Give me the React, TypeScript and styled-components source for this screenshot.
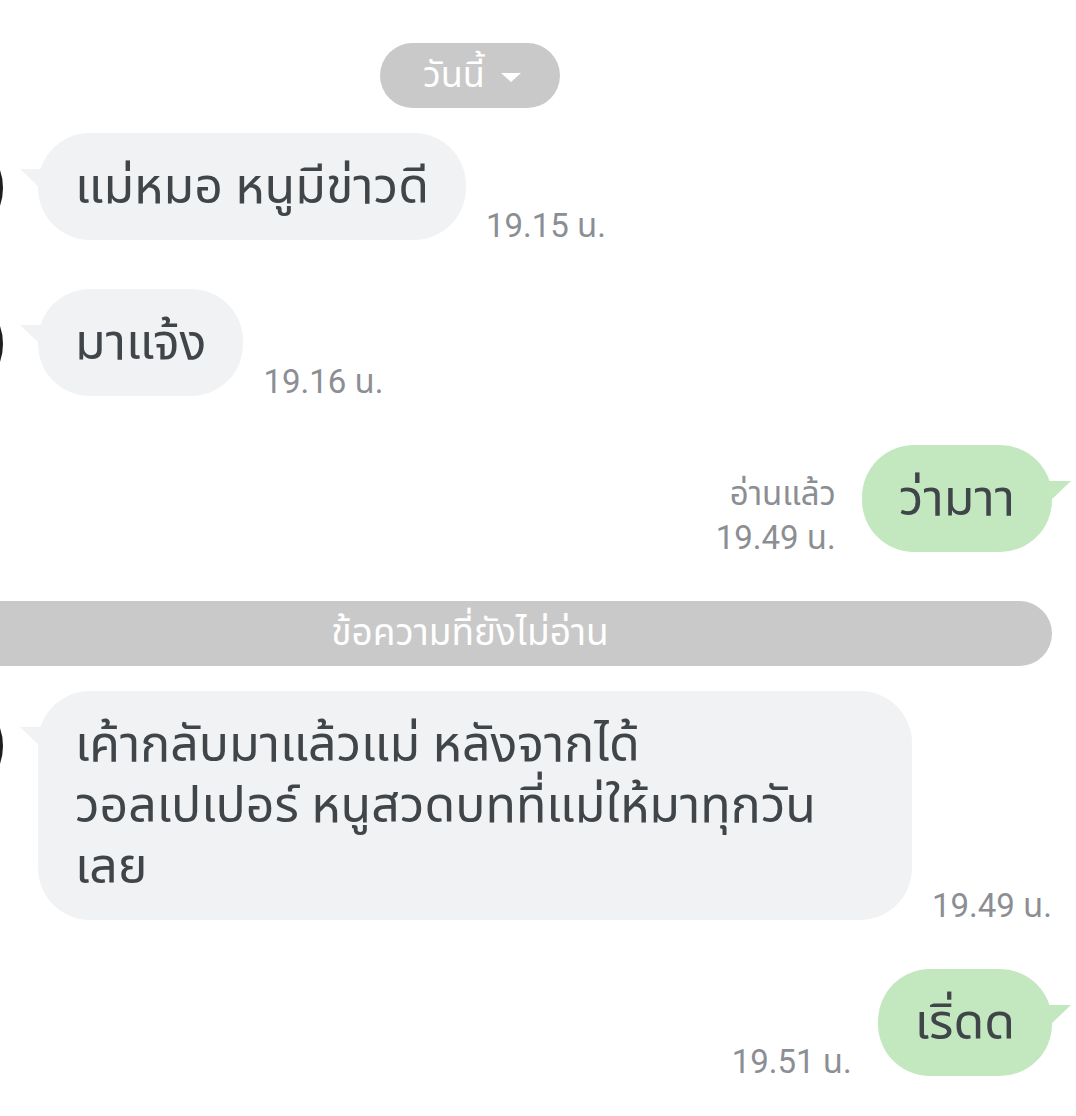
import React from "react";
import styled, { createGlobalStyle } from "styled-components";

const Global = createGlobalStyle`
  html, body { margin: 0; padding: 0; background: #ffffff; overflow: hidden; }
  body { font-family: Roboto, "Noto Sans Thai", "Noto Sans Thai UI", "Noto Sans", sans-serif; }
`;

const Viewport = styled.div`
  width: 1076px;
  height: 1116px;
  overflow: hidden;
`;

/* the captured screen is wider than the crop; it starts 136px left of it */
const Screen = styled.div`
  width: 1212px;
  margin-left: -136px;
  padding-top: 43px;
  display: flex;
  flex-direction: column;
`;

const DateChip = styled.div`
  align-self: center;
  box-sizing: border-box;
  height: 65px;
  width: 180px;
  padding-left: 4px;
  border-radius: 33px;
  background: #c9c9c9;
  color: #ffffff;
  font-size: 36px;
  display: flex;
  align-items: center;
  justify-content: center;
  gap: 16px;
  margin-bottom: 25px;
`;

const Caret = styled.span`
  width: 0;
  height: 0;
  border-left: 10px solid transparent;
  border-right: 10px solid transparent;
  border-top: 9px solid #ffffff;
  margin-top: 4px;
`;

const Row = styled.div<{ $out?: boolean }>`
  display: flex;
  align-items: flex-end;
  justify-content: ${(p) => (p.$out ? "flex-end" : "flex-start")};
  padding: ${(p) => (p.$out ? "0 24px 0 0" : "0 0 0 35px")};
  margin-bottom: 49px;
  position: relative;
`;

const Avatar = styled.div`
  position: absolute;
  left: 35px;
  top: 3px;
  width: 98px;
  height: 98px;
  border-radius: 50%;
  border: 3px solid #1e1e1e;
  background: #d9d9d9;
`;

const Bubble = styled.div<{ $out?: boolean; $width?: number }>`
  position: relative;
  box-sizing: border-box;
  ${(p) => (p.$width ? `width: ${p.$width}px;` : "")}
  margin-left: ${(p) => (p.$out ? "0" : "139px")};
  padding: 23px 37px;
  border-radius: 52px;
  background: ${(p) => (p.$out ? "#c3e8c0" : "#f1f2f4")};
  color: #40454a;
  font-size: 50px;
  line-height: 61px;
  white-space: nowrap;
  &::before {
    content: "";
    position: absolute;
    top: 36px;
    ${(p) => (p.$out ? "right: -19px;" : "left: -18px;")}
    width: 0;
    height: 0;
    border-top: 21px solid ${(p) => (p.$out ? "#c3e8c0" : "#f1f2f4")};
    ${(p) =>
      p.$out
        ? "border-right: 22px solid transparent;"
        : "border-left: 22px solid transparent;"}
  }
`;

const Meta = styled.div<{ $out?: boolean }>`
  display: flex;
  flex-direction: column;
  align-items: ${(p) => (p.$out ? "flex-end" : "flex-start")};
  color: #8b8e93;
  font-size: 33px;
  line-height: 44px;
  ${(p) => (p.$out ? "margin-right: 26px;" : "margin-left: 20px;")}
  margin-bottom: -8px;
  white-space: nowrap;
`;

const UnreadBar = styled.div`
  height: 65px;
  margin-right: 24px;
  padding-left: 24px;
  border-radius: 0 33px 33px 0;
  background: #c9c9c9;
  color: #ffffff;
  font-size: 37px;
  display: flex;
  align-items: center;
  justify-content: center;
  margin-bottom: 25px;
`;

type Msg = {
  out?: boolean;
  lines: string[];
  time: string;
  read?: boolean;
  width?: number;
};

const Message: React.FC<Msg> = ({ out, lines, time, read, width }) => (
  <Row $out={out}>
    {!out && <Avatar />}
    {out && (
      <Meta $out>
        {read && <span>อ่านแล้ว</span>}
        <span>{time}</span>
      </Meta>
    )}
    <Bubble $out={out} $width={width}>
      {lines.map((l, i) => (
        <React.Fragment key={i}>
          {i > 0 && <br />}
          {l}
        </React.Fragment>
      ))}
    </Bubble>
    {!out && (
      <Meta>
        <span>{time}</span>
      </Meta>
    )}
  </Row>
);

export default function App() {
  return (
    <Viewport>
      <Global />
      <Screen>
        <DateChip>
          วันนี้
          <Caret />
        </DateChip>
        <Message lines={["แม่หมอ หนูมีข่าวดี"]} time="19.15 น." />
        <Message lines={["มาแจ้ง"]} time="19.16 น." />
        <Message out read lines={["ว่ามาา"]} time="19.49 น." />
        <UnreadBar>ข้อความที่ยังไม่อ่าน</UnreadBar>
        <Message
          width={874}
          lines={[
            "เค้ากลับมาแล้วแม่ หลังจากได้",
            "วอลเปเปอร์ หนูสวดบทที่แม่ให้มาทุกวัน",
            "เลย",
          ]}
          time="19.49 น."
        />
        <Message out lines={["เริ่ดด"]} time="19.51 น." />
      </Screen>
    </Viewport>
  );
}
